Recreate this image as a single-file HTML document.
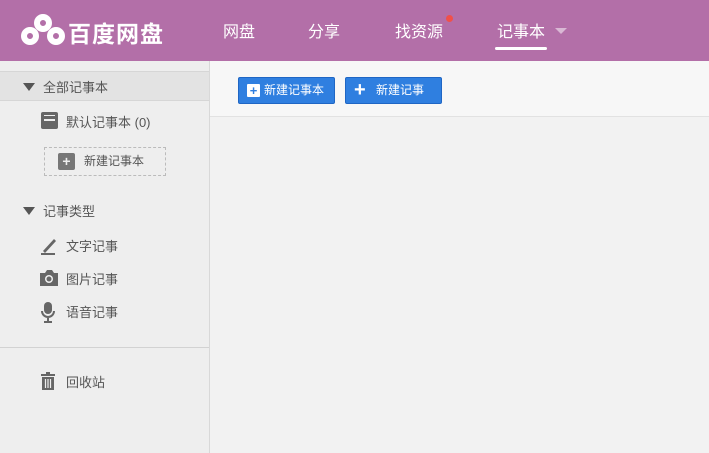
<!DOCTYPE html>
<html><head><meta charset="utf-8"><style>
*{margin:0;padding:0;box-sizing:border-box}
body{width:709px;height:453px;overflow:hidden;background:#f2f2f2;font-family:"Liberation Sans","Noto Sans CJK SC",sans-serif;position:relative}
.hd{position:absolute;left:0;top:0;width:709px;height:61px;background:#b36fa8}
.logo{position:absolute;left:68px;top:15px;color:#fff;font-size:23px;font-weight:bold;letter-spacing:1px}
.nav{position:absolute;top:18px;color:#fff;font-size:16px}
.side{position:absolute;left:0;top:61px;width:210px;height:392px;background:#eeeeee;border-right:1px solid #d8d8d8}
.tb{position:absolute;left:210px;top:61px;width:499px;height:56px;background:#f7f7f7;border-bottom:1px solid #e2e2e2}
.btn{position:absolute;top:16px;height:27px;background:#2f7fe0;border:1px solid #1f66c4;border-radius:2px;color:#fff;font-size:12px;line-height:25px}
.t{position:absolute;color:#555;font-size:13px}
.tri{position:absolute;width:0;height:0;border-left:6px solid transparent;border-right:6px solid transparent;border-top:8px solid #555}
</style></head><body>
<div class="hd">
<svg style="position:absolute;left:20px;top:13px" width="46" height="34" viewBox="0 0 46 34"><g fill="none" stroke="#fff" stroke-width="6"><circle cx="23" cy="10" r="6"/><circle cx="10" cy="23" r="6"/><circle cx="36" cy="23" r="6"/></g></svg>
<div class="logo">百度网盘</div>
<div class="nav" style="left:223px">网盘</div>
<div class="nav" style="left:308px">分享</div>
<div class="nav" style="left:395px">找资源</div>
<div style="position:absolute;left:446px;top:15px;width:7px;height:7px;border-radius:50%;background:#f0504a"></div>
<div class="nav" style="left:497px">记事本</div>
<div style="position:absolute;left:555px;top:28px;border-left:6px solid transparent;border-right:6px solid transparent;border-top:6px solid #d9b8d4"></div>
<div style="position:absolute;left:495px;top:47px;width:52px;height:3px;border-radius:2px;background:#fff"></div>
</div>
<div class="side">
<div style="position:absolute;left:0;top:10px;width:209px;height:30px;background:#e3e3e3;border-top:1px solid #d6d6d6;border-bottom:1px solid #d6d6d6"></div>
<div class="tri" style="left:23px;top:22px"></div>
<div class="t" style="left:43px;top:16px">全部记事本</div>
<div style="position:absolute;left:41px;top:51px;width:17px;height:17px;background:#666;border-radius:2px"><div style="position:absolute;left:3px;top:7px;width:11px;height:2px;background:#eee"></div><div style="position:absolute;left:3px;top:3px;width:11px;height:1px;background:#eee"></div></div>
<div class="t" style="left:66px;top:51px">默认记事本 (0)</div>
<div style="position:absolute;left:44px;top:86px;width:122px;height:29px;border:1px dashed #bbb"></div>
<div style="position:absolute;left:58px;top:92px;width:17px;height:17px;background:#777;border-radius:2px;color:#eee;font-size:14px;line-height:17px;text-align:center;font-weight:bold">+</div>
<div class="t" style="left:84px;top:91px;font-size:12px">新建记事本</div>
<div class="tri" style="left:23px;top:146px"></div>
<div class="t" style="left:43px;top:140px">记事类型</div>
<svg style="position:absolute;left:39px;top:174px" width="20" height="20" viewBox="0 0 20 20"><path d="M4 16 L15 4 L17 6 L6 18Z" fill="#666"/><path d="M2 19H16" stroke="#666" stroke-width="2"/></svg>
<div class="t" style="left:66px;top:175px">文字记事</div>
<svg style="position:absolute;left:39px;top:208px" width="20" height="18" viewBox="0 0 20 18"><path d="M1 4H6L8 1H13L15 4H19V17H1Z" fill="#666"/><circle cx="10" cy="10" r="4" fill="#eee"/><circle cx="10" cy="10" r="2.5" fill="#666"/></svg>
<div class="t" style="left:66px;top:208px">图片记事</div>
<svg style="position:absolute;left:40px;top:240px" width="16" height="22" viewBox="0 0 16 22"><rect x="4" y="1" width="8" height="12" rx="4" fill="#666"/><path d="M2 10a6 6 0 0 0 12 0M8 16v4M4 21h8" stroke="#666" stroke-width="2" fill="none"/></svg>
<div class="t" style="left:66px;top:241px">语音记事</div>
<div style="position:absolute;left:0;top:286px;width:209px;height:1px;background:#d2d2d2"></div>
<svg style="position:absolute;left:40px;top:311px" width="16" height="19" viewBox="0 0 16 19"><rect x="1" y="2" width="14" height="2" fill="#666"/><rect x="6" y="0" width="4" height="2" fill="#666"/><path d="M2 5H14V18H2Z" fill="#666"/><path d="M5.5 7V16M8 7V16M10.5 7V16" stroke="#eee" stroke-width="1.2"/></svg>
<div class="t" style="left:66px;top:311px">回收站</div>
</div>
<div class="tb">
<div class="btn" style="left:28px;width:97px"><span style="position:absolute;left:8px;top:6px;width:13px;height:13px;background:#fff;border-radius:1px;color:#2f7fe0;font-size:13px;line-height:13px;text-align:center;font-weight:bold">+</span><span style="position:absolute;left:25px">新建记事本</span></div>
<div class="btn" style="left:135px;width:97px"><span style="position:absolute;left:8px;top:0;font-size:20px;font-weight:bold;line-height:24px">+</span><span style="position:absolute;left:30px">新建记事</span></div>
</div>
</body></html>
